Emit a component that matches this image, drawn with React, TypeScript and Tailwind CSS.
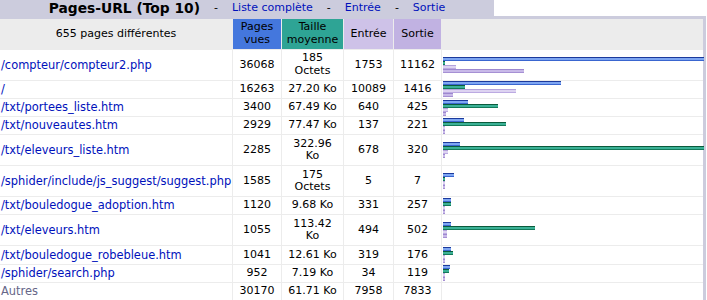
const MAX_PAGES = 36068;
const MAX_KB = 322.96;
const BAR_W = 261;

type Row = {
  url: string;
  pages: number;
  size: string[];
  kb: number;
  entry: number;
  exit: number;
};

const rows: Row[] = [
  { url: "/compteur/compteur2.php", pages: 36068, size: ["185", "Octets"], kb: 0.18, entry: 1753, exit: 11162 },
  { url: "/", pages: 16263, size: ["27.20 Ko"], kb: 27.2, entry: 10089, exit: 1416 },
  { url: "/txt/portees_liste.htm", pages: 3400, size: ["67.49 Ko"], kb: 67.49, entry: 640, exit: 425 },
  { url: "/txt/nouveautes.htm", pages: 2929, size: ["77.47 Ko"], kb: 77.47, entry: 137, exit: 221 },
  { url: "/txt/eleveurs_liste.htm", pages: 2285, size: ["322.96", "Ko"], kb: 322.96, entry: 678, exit: 320 },
  { url: "/sphider/include/js_suggest/suggest.php", pages: 1585, size: ["175", "Octets"], kb: 0.17, entry: 5, exit: 7 },
  { url: "/txt/bouledogue_adoption.htm", pages: 1120, size: ["9.68 Ko"], kb: 9.68, entry: 331, exit: 257 },
  { url: "/txt/eleveurs.htm", pages: 1055, size: ["113.42", "Ko"], kb: 113.42, entry: 494, exit: 502 },
  { url: "/txt/bouledogue_robebleue.htm", pages: 1041, size: ["12.61 Ko"], kb: 12.61, entry: 319, exit: 176 },
  { url: "/sphider/search.php", pages: 952, size: ["7.19 Ko"], kb: 7.19, entry: 34, exit: 119 },
];

const w = (v: number, max: number) => Math.max(2, Math.round((v / max) * BAR_W));

const cell = "bg-white flex flex-col items-center justify-center py-[2.25px] whitespace-nowrap";

const Bars = ({ r }: { r: Row }) => (
  <div className="bg-white flex flex-col justify-center pl-px">
    <div className="h-[4px] bg-[linear-gradient(#1c3a9c_0_1px,#7ea6f2_1px_3px,#3a66d0_3px)]" style={{ width: w(r.pages, MAX_PAGES) }} />
    <div className="h-[4px] bg-[linear-gradient(#0b5b3c_0_1px,#3bb196_1px_3px,#137a5a_3px)]" style={{ width: w(r.kb, MAX_KB) }} />
    <div className="h-[4px] bg-[linear-gradient(#b3a2dc_0_1px,#ddd3f1_1px_3px,#bcaae2_3px)]" style={{ width: w(r.entry, MAX_PAGES) }} />
    <div className="h-[4px] bg-[linear-gradient(#9d88cf_0_1px,#c8b9e8_1px_3px,#a690d4_3px)]" style={{ width: w(r.exit, MAX_PAGES) }} />
  </div>
);

export default function App() {
  return (
    <div className="w-[706px] bg-[#ccccdd] font-['DejaVu_Sans','Liberation_Sans',sans-serif] text-[11px] leading-[12.7px] text-black">
      {/* Title */}
      <div className="flex h-[16px]">
        <div className="w-[494px] flex items-center justify-center gap-[14px]">
          <span className="text-[13.8px] font-bold">Pages-URL (Top 10)</span>
          <span>-</span>
          <a className="text-[#0011bb]">Liste complète</a>
          <span>-</span>
          <a className="text-[#0011bb]">Entrée</a>
          <span>-</span>
          <a className="text-[#0011bb]">Sortie</a>
        </div>
        <div className="flex-1 bg-white" />
      </div>

      {/* Data */}
      <div className="pt-[3px] pr-[3px] pb-[3px]">
        <div className="grid grid-cols-[232px_48px_61px_49px_47px_261px] gap-px bg-[#ececec]">
          <div className="bg-[#ececec] flex items-center justify-center">655 pages différentes</div>
          <div className="bg-[#4477dd] flex flex-col items-center justify-center py-[2.25px]">
            <span>Pages</span>
            <span>vues</span>
          </div>
          <div className="bg-[#2ea495] flex flex-col items-center justify-center py-[2.25px]">
            <span>Taille</span>
            <span>moyenne</span>
          </div>
          <div className="bg-[#cec2e8] flex items-center justify-center">Entrée</div>
          <div className="bg-[#c1b2e2] flex items-center justify-center">Sortie</div>
          <div className="bg-[#ececec]" />

          {rows.map((r) => (
            <div key={r.url} className="contents">
              <div className="bg-white flex items-center pl-px whitespace-nowrap text-[11.45px] text-[#0011bb]">{r.url}</div>
              <div className={cell}>{r.pages}</div>
              <div className={cell}>
                {r.size.map((s) => (
                  <span key={s}>{s}</span>
                ))}
              </div>
              <div className={cell}>{r.entry}</div>
              <div className={cell}>{r.exit}</div>
              <Bars r={r} />
            </div>
          ))}

          <div className="bg-white flex items-center pl-px text-[11.45px] text-[#666688]">Autres</div>
          <div className={cell}>30170</div>
          <div className={cell}>61.71 Ko</div>
          <div className={cell}>7958</div>
          <div className={cell}>7833</div>
          <div className="bg-white" />
        </div>
      </div>
    </div>
  );
}
